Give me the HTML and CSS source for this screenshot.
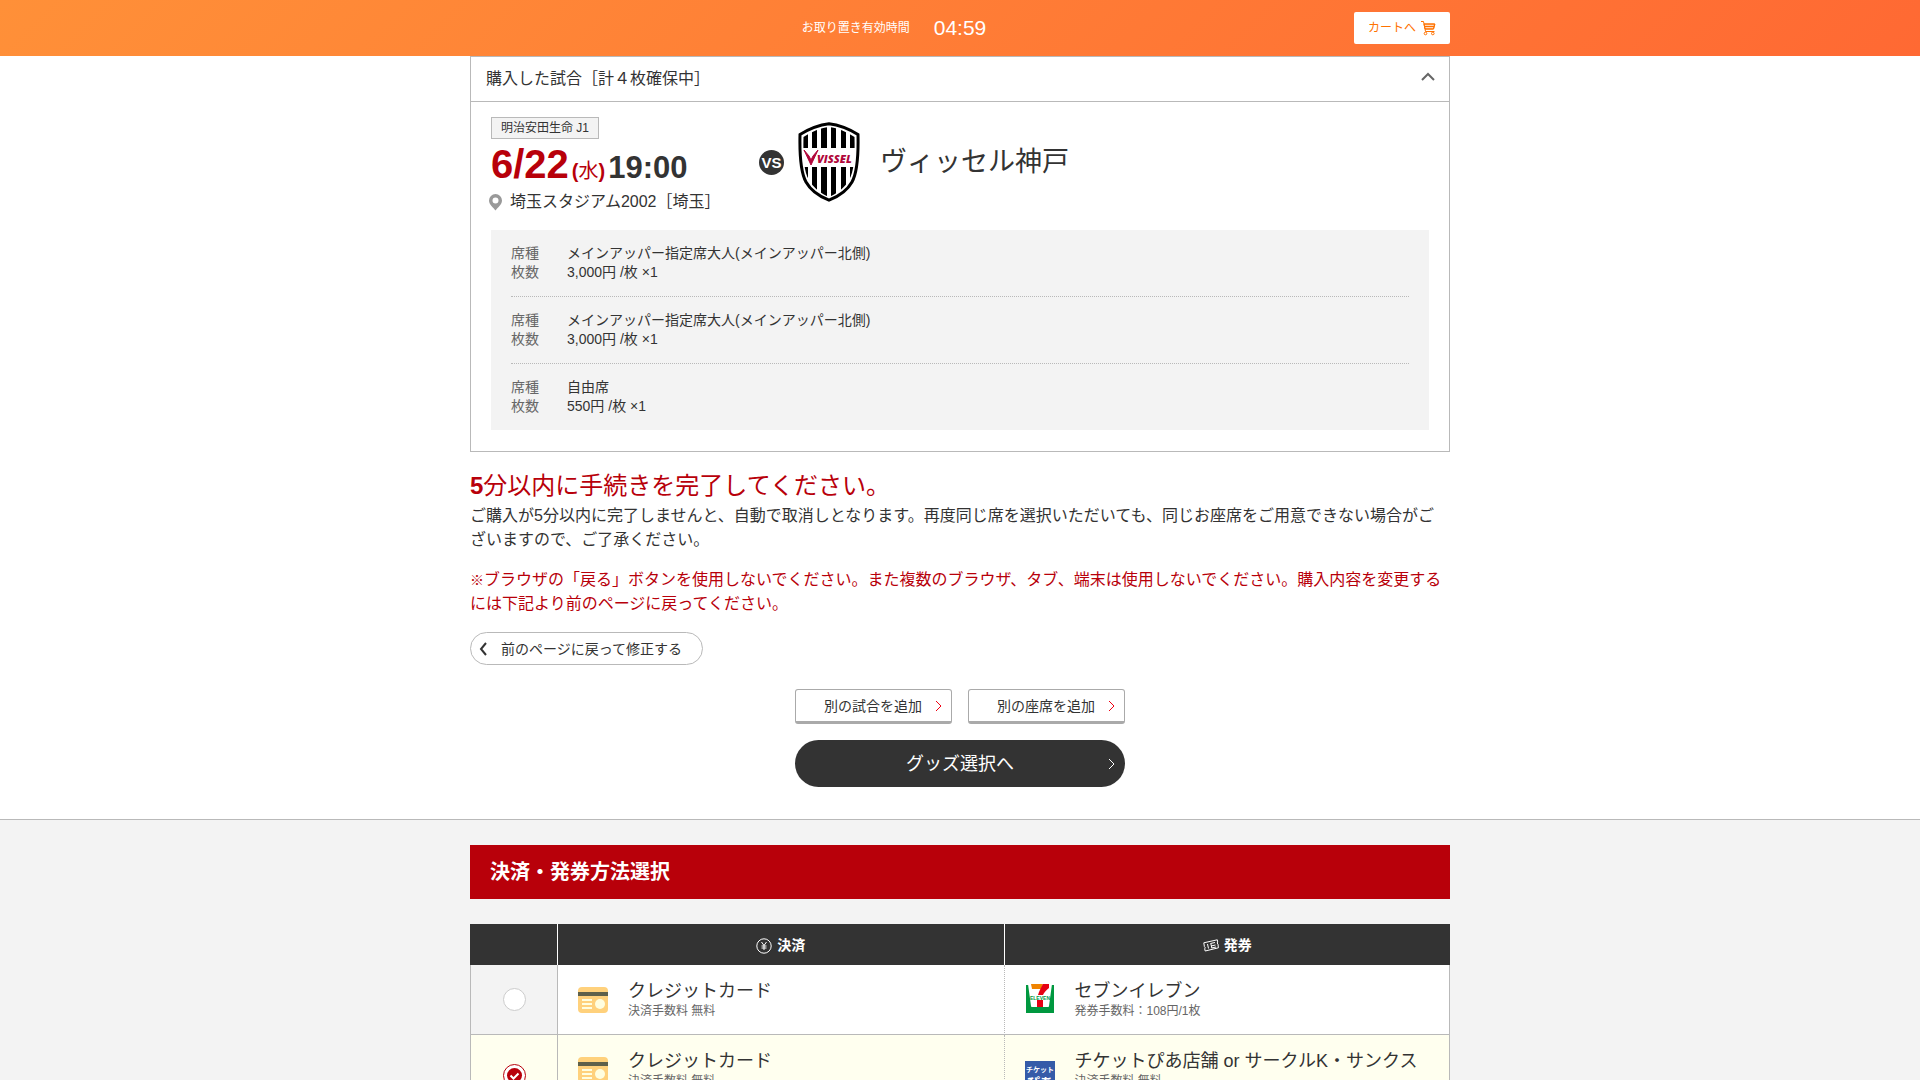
FILE: index.html
```html
<!DOCTYPE html>
<html lang="ja">
<head>
<meta charset="utf-8">
<meta name="viewport" content="width=device-width, initial-scale=1">
<title>決済・発券方法選択</title>
<link rel="stylesheet" href="styles.css">
</head>
<body>
<header class="timer-bar">
  <div class="container timer-inner">
    <p class="timer"><span class="timer-label">お取り置き有効時間</span><time class="timer-value">04:59</time></p>
    <a class="cart-link" href="#cart">カートへ
      <svg class="cart-icon" viewBox="0 0 16 16" aria-hidden="true"><path d="M4 4h10.500l-1 5H5z" fill="#ffd9bd"/><path d="M1 1.500h2.500l2 10h9M4 4h11l-1.500 5H5M4.500 6.500h9.500"/><circle cx="5.500" cy="13.500" r="1.300"/><circle cx="12.800" cy="13.500" r="1.300"/></svg>
    </a>
  </div>
</header>

<main>
  <div class="container">
    <section class="match">
      <h1 class="match-head">購入した試合［計４枚確保中］
        <button class="toggle" type="button" aria-label="閉じる"><svg viewBox="0 0 14 9"><path d="M1 8l6-6 6 6"/></svg></button>
      </h1>
      <div class="match-body">
        <div class="match-info">
          <div class="schedule">
            <span class="league">明治安田生命 J1</span>
            <p class="date"><span class="day">6/22</span><span class="week">(<span class="kanji">水</span>)</span><span class="time">19:00</span></p>
            <p class="place"><svg class="pin" viewBox="0 0 14 17" aria-hidden="true"><path fill-rule="evenodd" d="M6.500 0A6.500 6.500 0 0 1 13 6.500C13 11 8.500 13.500 6.500 16.500 4.500 13.500 0 11 0 6.500A6.500 6.500 0 0 1 6.500 0zm0 3.500a3 3 0 1 0 0 6 3 3 0 0 0 0-6z"/></svg>埼玉スタジアム2002［埼玉］</p>
          </div>
          <div class="opponent">
            <span class="vs">VS</span>
            <svg class="emblem" viewBox="0 0 62 80" role="img" aria-label="VISSEL">
              <defs><clipPath id="shield"><path d="M31 5C22 6 13 10 5.500 15 5 35 6 50 11 58c4 8 13 14 20 17 7-3 16-9 20-17 5-8 6-23 5.500-43C49 10 40 6 31 5z"/></clipPath></defs>
              <path d="M31 1.800C21 3 11 7 2 12.500 1.500 34 3 51 8 60c5 9 15 15 23 18.200C39 75 49 69 54 60c5-9 6.500-26 6-47.500C51 7 41 3 31 1.800z" fill="#fff" stroke="#000" stroke-width="3"/>
              <path clip-path="url(#shield)" d="M4 5h6v21H4zM14 5h5v21h-5zM23 5h6v21h-6zM33 5h5v21h-5zM43 5h5v21h-5zM52 5h5v21h-5zM4 45h6v32H4zM14 45h5v32h-5zM23 45h6v32h-6zM33 45h5v32h-5zM43 45h5v32h-5zM52 45h5v32h-5z"/>
              <path d="M6 28l7 15 7-15-5 6-2 4-2-4z" fill="#b1063a" stroke="#b1063a"/>
              <text x="19" y="41" class="emblem-text">VISSEL</text>
            </svg>
            <span class="team">ヴィッセル神戸</span>
          </div>
        </div>
        <div class="seats">
          <dl class="seat"><dt>席種</dt><dd>メインアッパー指定席大人(メインアッパー北側)</dd><dt>枚数</dt><dd>3,000円 /枚 ×1</dd></dl>
          <dl class="seat"><dt>席種</dt><dd>メインアッパー指定席大人(メインアッパー北側)</dd><dt>枚数</dt><dd>3,000円 /枚 ×1</dd></dl>
          <dl class="seat"><dt>席種</dt><dd>自由席</dd><dt>枚数</dt><dd>550円 /枚 ×1</dd></dl>
        </div>
      </div>
    </section>

    <section class="notice">
      <h2 class="notice-title"><b>5</b>分以内に手続きを完了してください。</h2>
      <p class="notice-text">ご購入が5分以内に完了しませんと、自動で取消しとなります。再度同じ席を選択いただいても、同じお座席をご用意できない場合がございますので、ご了承ください。</p>
      <p class="notice-text warning"><b class="mark">※</b>ブラウザの「戻る」ボタンを使用しないでください。また複数のブラウザ、タブ、端末は使用しないでください。購入内容を変更するには下記より前のページに戻ってください。</p>
      <a class="back" href="#back"><svg class="back-arrow" viewBox="0 0 8 14" aria-hidden="true"><path d="M7 1L2 7l5 6"/></svg>前のページに戻って修正する</a>
    </section>

    <nav class="actions">
      <div class="add-row">
        <button class="add" type="button">別の試合を追加<svg class="arrow" viewBox="0 0 7 12" aria-hidden="true"><path d="M1 1l5 5-5 5"/></svg></button>
        <button class="add" type="button">別の座席を追加<svg class="arrow" viewBox="0 0 7 12" aria-hidden="true"><path d="M1 1l5 5-5 5"/></svg></button>
      </div>
      <button class="next" type="button">グッズ選択へ<svg class="arrow" viewBox="0 0 7 12" aria-hidden="true"><path d="M1 1l5 5-5 5"/></svg></button>
    </nav>
  </div>

  <section class="payment">
    <div class="container">
      <h2 class="payment-title">決済・発券方法選択</h2>
      <table class="methods">
        <thead>
          <tr>
            <th class="col-pick" aria-label="選択"></th>
            <th><span class="th-label"><svg class="th-icon" viewBox="0 0 16 16" aria-hidden="true"><circle cx="8" cy="8" r="7.200"/><path d="M5.500 4L8 7.500 10.500 4M8 7.500V12M5.500 8h5M5.500 10h5"/></svg>決済</span></th>
            <th><span class="th-label"><svg class="th-icon" viewBox="0 0 16 16" aria-hidden="true"><path d="M.8 4.800L14.300 1.800l.4 2.200-.6 1 .9 1.200.4 3.600L2.200 13l-.5-2.200.6-1-.9-1.200zM4.500 6l1 4.500M7.500 5.500L12 4.500M7.800 5.500l1 4.500M8 8l4.500-1M8.500 10l4.500-1"/></svg>発券</span></th>
          </tr>
        </thead>
        <tbody>
          <tr>
            <td class="pick"><input type="radio" name="method" aria-label="クレジットカード / セブンイレブン"></td>
            <td><div class="method">
              <svg class="method-icon card-icon" viewBox="0 0 30 26" aria-hidden="true"><rect width="30" height="26" rx="4" fill="#ffd17c"/><path d="M0 5h30v4H0z" fill="#5f604a"/><path d="M4 12h10v2H4zM4 16h10v2H4zM4 20h10v2H4z" fill="#fffee0"/><circle cx="22" cy="17" r="5" fill="#fffee0"/></svg>
              <p class="method-text"><span class="method-name">クレジットカード</span><span class="fee">決済手数料 無料</span></p>
            </div></td>
            <td><div class="method">
              <svg class="method-icon store-icon" viewBox="0 0 30 30" aria-hidden="true"><path d="M1 2h28v28H1z" fill="#00983f"/><path d="M3 1h24l-3 22c0 1-1 1-1 1H7s-1 0-1-1z" fill="#fff"/><path d="M6 1h12l-2 5H7z" fill="#f08300"/><path d="M18 1h6v4c-3 2-5 5-6 7h-5c1-4 3-7 5-11z" fill="#e60012"/><path d="M12 17h6v7h-6z" fill="#e60012"/><text x="15" y="17" class="store-text">ELEVEN</text></svg>
              <p class="method-text"><span class="method-name">セブンイレブン</span><span class="fee">発券手数料：108円/1枚</span></p>
            </div></td>
          </tr>
          <tr class="selected">
            <td class="pick"><input type="radio" name="method" checked aria-label="クレジットカード / チケットぴあ店舗"></td>
            <td><div class="method">
              <svg class="method-icon card-icon" viewBox="0 0 30 26" aria-hidden="true"><rect width="30" height="26" rx="4" fill="#ffd17c"/><path d="M0 5h30v4H0z" fill="#5f604a"/><path d="M4 12h10v2H4zM4 16h10v2H4zM4 20h10v2H4z" fill="#fffee0"/><circle cx="22" cy="17" r="5" fill="#fffee0"/></svg>
              <p class="method-text"><span class="method-name">クレジットカード</span><span class="fee">決済手数料 無料</span></p>
            </div></td>
            <td><div class="method">
              <svg class="method-icon pia-icon" viewBox="0 0 30 30" aria-hidden="true"><path d="M0 0h30v30H0z" fill="#355ba8"/><text x="15" y="11" class="pia-small">チケット</text><text x="15" y="26" class="pia-large">ぴあ</text></svg>
              <p class="method-text"><span class="method-name">チケットぴあ店舗 or サークルK・サンクス</span><span class="fee">決済手数料 無料</span></p>
            </div></td>
          </tr>
        </tbody>
      </table>
    </div>
  </section>
</main>
</body>
</html>
```
FILE: styles.css
```css
* { box-sizing: border-box; }

body {
  margin: 0;
  background: #fff;
  color: #333;
  font-family: "Liberation Sans", "Noto Sans CJK JP", sans-serif;
  font-size: 16px;
  line-height: 24px;
}

h1, h2, p, dl, dd { margin: 0; }
h1, h2 { font-weight: 400; }
a { color: inherit; text-decoration: none; }
button { font: inherit; color: inherit; cursor: pointer; }
svg { display: block; flex: none; }

.container { max-width: 980px; margin: 0 auto; }

/* countdown bar */
.timer-bar { background: linear-gradient(135deg, #ff9038, #ff6933); color: #fff; }
.timer-inner {
  display: grid;
  grid-template-columns: 1fr auto;
  gap: 36px;
  align-items: center;
  padding: 12px 0;
}
.timer { display: flex; align-items: center; justify-content: center; gap: 24px; }
.timer-label { font-size: 12px; }
.timer-value { font-size: 21px; }
.cart-link {
  display: flex;
  align-items: center;
  gap: 4px;
  height: 32px;
  padding: 0 14px;
  border-radius: 2px;
  background: #fff;
  color: #ff7200;
  font-size: 12px;
}
.cart-icon { width: 16px; height: 16px; fill: none; stroke: #ff7200; stroke-width: 1; }

/* purchased match */
.match { border: 1px solid #b9b9b9; }
.match-head {
  display: flex;
  align-items: center;
  justify-content: space-between;
  padding: 10px 14px 10px 15px;
  border-bottom: 1px solid #b9b9b9;
  font-size: 16px;
}
.toggle { padding: 0 0 5px; border: 0; background: none; }
.toggle svg { width: 14px; height: 9px; fill: none; stroke: #666; stroke-width: 2; }
.match-body { padding: 15px 20px 21px; }
.match-info { display: flex; gap: 48px; margin-bottom: 17px; }
.schedule { width: 220px; }
.league {
  display: block;
  width: max-content;
  padding: 0 9px;
  border: 1px solid #b9b9b9;
  background: #f3f3f3;
  font-size: 12px;
  line-height: 20px;
}
.date {
  display: flex;
  align-items: baseline;
  gap: 3px;
  padding-top: 5px;
  font-weight: 700;
  line-height: 40px;
}
.day { color: #b8000a; font-size: 40px; }
.week { color: #b8000a; font-size: 20px; }
.kanji { font-weight: 400; }
.time { font-size: 31px; }
.place {
  display: flex;
  align-items: center;
  gap: 7px;
  margin-left: -2px;
  line-height: 22px;
  white-space: nowrap;
}
.pin { width: 14px; height: 17px; fill: #999; }
.opponent { display: flex; align-items: center; align-self: flex-start; margin-top: 5px; }
.vs {
  width: 25px;
  height: 25px;
  border-radius: 50%;
  background: #333;
  color: #fff;
  font-size: 15px;
  font-weight: 700;
  line-height: 25px;
  text-align: center;
}
.emblem { width: 62px; height: 80px; margin: 0 20px 0 14px; }
.emblem-text { fill: #b1063a; font: italic 800 11px "Open Sans", sans-serif; }
.team { font-size: 27px; }

.seats { padding: 0 20px; background: #f3f3f3; font-size: 14px; line-height: 19px; }
.seat { display: grid; grid-template-columns: 56px 1fr; padding: 14px 0; }
.seat + .seat { border-top: 1px dotted #b9b9b9; }
.seat dt { color: #666; }

/* time limit notice */
.notice { padding-top: 16px; }
.notice-title { color: #b8000a; font-size: 24px; line-height: 36px; }
.notice-text { padding-right: 8px; }
.warning { margin: 16px 0; color: #b8000a; }
.mark { font-family: "Noto Sans CJK JP", sans-serif; font-size: 14px; line-height: 1; }
.back {
  display: flex;
  align-items: center;
  gap: 14px;
  width: max-content;
  height: 33px;
  padding: 0 20px 0 8px;
  border: 1px solid #b9b9b9;
  border-radius: 17px;
  font-size: 14px;
}
.back-arrow { width: 8px; height: 14px; fill: none; stroke: #333; stroke-width: 2; }

/* action buttons */
.actions { width: 330px; margin: 24px auto 32px; }
.add-row { display: grid; grid-template-columns: 1fr 1fr; gap: 16px; margin-bottom: 16px; }
.add, .next { display: flex; align-items: center; justify-content: flex-end; }
.add {
  gap: 13px;
  height: 35px;
  padding: 0 9px;
  border: 1px solid #aaa;
  border-bottom-width: 3px;
  border-radius: 3px;
  background: #fff;
  font-size: 14px;
}
.arrow { width: 7px; height: 12px; fill: none; stroke: #f00012; }
.next {
  gap: 94px;
  width: 100%;
  height: 47px;
  padding: 0 10px;
  border: 0;
  border-radius: 24px;
  background: #333;
  color: #fff;
  font-size: 18px;
}
.next .arrow { stroke: #fff; }

/* payment and ticketing methods */
.payment { border-top: 1px solid #b9b9b9; background: #f3f3f3; padding: 25px 0; }
.payment-title {
  margin-bottom: 25px;
  padding: 15px 20px;
  background: #b8000a;
  color: #fff;
  font-size: 20px;
  font-weight: 700;
}
.methods { width: 100%; border-spacing: 0; table-layout: fixed; }
.methods th {
  height: 41px;
  padding: 0;
  background: #333;
  color: #fff;
  font-size: 14px;
}
.methods th + th { border-left: 1px solid #fff; }
.methods .col-pick { width: 87px; }
.th-label { display: flex; justify-content: center; align-items: center; gap: 5px; }
.th-icon { width: 16px; height: 16px; margin-top: 2px; fill: none; stroke: #fff; stroke-width: 1; }
.methods td {
  height: 70px;
  padding: 0;
  border-bottom: 1px solid #b9b9b9;
  background: #fff;
  vertical-align: top;
}
.methods td + td { border-left: 1px solid #b9b9b9; }
.methods td:first-child { border-left: 1px solid #b9b9b9; }
.methods td:last-child { border-left-style: dotted; border-right: 1px solid #b9b9b9; }
.methods .pick { background: #f3f3f3; text-align: center; vertical-align: middle; }
.methods .selected td { height: 82px; background: #ffffef; }

.pick input {
  appearance: none;
  display: block;
  width: 23px;
  height: 23px;
  margin: 0 auto;
  border: 1px solid #ccc;
  border-radius: 50%;
  background: #fff;
}
.pick input:checked {
  border-color: #b8000a;
  background: #fff url("data:image/svg+xml,%3Csvg xmlns='http://www.w3.org/2000/svg' viewBox='0 0 21 21'%3E%3Ccircle cx='10.5' cy='10.5' r='7.500' fill='%23b8000a'/%3E%3Cpath d='M6.500 10.500l3 3 5-5' fill='none' stroke='%23fff' stroke-width='2'/%3E%3C/svg%3E");
}

.method { display: flex; align-items: flex-start; gap: 20px; padding: 15px 20px 14px; }
.method-icon { width: 30px; }
.card-icon { height: 26px; margin-top: 7px; }
.store-icon { height: 30px; margin-top: 3px; }
.pia-icon { height: 30px; margin-top: 11px; }
.method-text { display: flex; flex-direction: column; }
.method-name { font-size: 18px; line-height: 22px; }
.fee { color: #666; font-size: 12px; line-height: 18px; }
.store-text { fill: #00983f; font-size: 5px; font-weight: 700; text-anchor: middle; }
.pia-small { fill: #fff; font-size: 7px; font-weight: 700; text-anchor: middle; }
.pia-large { fill: #fff; font-size: 13px; font-weight: 700; text-anchor: middle; }
```
